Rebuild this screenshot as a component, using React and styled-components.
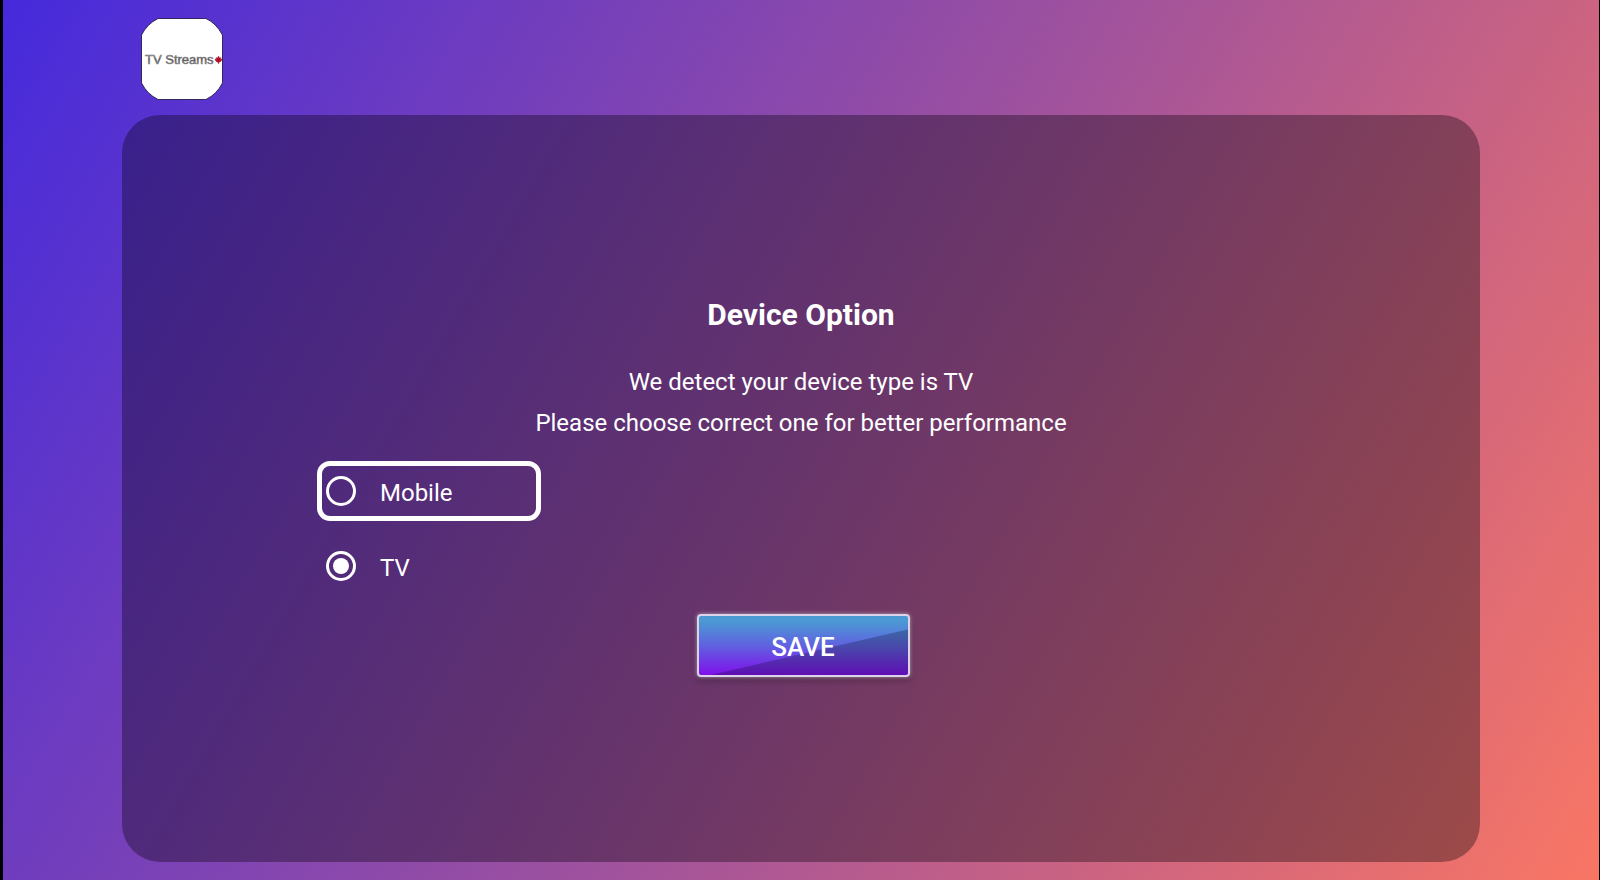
import { useState } from 'react';
import styled, { createGlobalStyle } from 'styled-components';

const GlobalStyle = createGlobalStyle`
  * {
    box-sizing: border-box;
  }
  body {
    margin: 0;
    background: #000;
    color: #fff;
    font-family: Roboto, "Liberation Sans", sans-serif;
  }
`;

const Page = styled.div`
  min-height: 100vh;
  display: flex;
  flex-direction: column;
  padding: 18px 119px;
  border-left: 3px solid #000;
  border-right: 1px solid #000;
  background: linear-gradient(120deg, #452adc, #9b50a0, #f97664);
  background-origin: padding-box;
`;

const Header = styled.header`
  padding: 0 19px 15px;
`;

const Logo = styled.svg`
  display: block;
  width: 82px;
  height: 82px;
`;

const Panel = styled.main`
  flex: 1;
  display: flex;
  flex-direction: column;
  justify-content: center;
  padding: 0 195px 6px;
  border-radius: 38px;
  background: rgba(4, 0, 6, 0.34);
`;

const Title = styled.h1`
  margin: 0 0 27px;
  font-size: 30px;
  line-height: 40px;
  font-weight: 700;
  text-align: center;
`;

const Message = styled.p`
  margin: 0;
  font-size: 24px;
  line-height: 41px;
  text-align: center;
`;

const Options = styled.div`
  display: flex;
  flex-direction: column;
  align-items: flex-start;
  gap: 15px;
  padding: 17px 0 18px;
`;

const Option = styled.label`
  display: flex;
  align-items: center;
  gap: 24px;
  width: 224px;
  height: 60px;
  padding-left: 4px;
  border: 5px solid ${(props) => (props.$focused ? '#fff' : 'transparent')};
  border-radius: 13px;
  cursor: pointer;
`;

const OptionText = styled.span`
  padding-top: 4px;
  font-size: 24px;
  line-height: 28px;
`;

const Radio = styled.input`
  appearance: none;
  display: grid;
  place-items: center;
  width: 30px;
  height: 30px;
  margin: 0;
  border: 3px solid #fff;
  border-radius: 50%;
  outline: none;

  &:checked::before {
    content: "";
    width: 16px;
    height: 16px;
    border-radius: 50%;
    background: #fff;
  }
`;

const Actions = styled.div`
  display: flex;
  justify-content: center;
  padding-left: 4px;
`;

const SaveButton = styled.button`
  width: 213px;
  height: 63px;
  padding: 4px 0 0;
  border: 2px solid #dcd3ea;
  border-radius: 4px;
  background:
    linear-gradient(167deg, transparent 57%, rgba(0, 10, 20, 0.26) 58%),
    linear-gradient(#4b9ad4 8%, #6062e0 50%, #8010ea);
  background-origin: padding-box;
  box-shadow: 0 0 4px rgba(255, 255, 255, 0.55), 0 3px 6px rgba(0, 0, 0, 0.35);
  color: #fff;
  font-family: inherit;
  font-size: 26px;
  font-weight: 500;
  cursor: pointer;
`;

const devices = ['Mobile', 'TV'];

const BrandLogo = () => (
  <Logo viewBox="0 0 82 82" role="img" aria-label="TV Streams">
    <defs>
      <linearGradient id="metal" x1="0" y1="0" x2="0" y2="1">
        <stop offset="0.2" stopColor="#aaa" />
        <stop offset="0.5" stopColor="#333" />
        <stop offset="0.85" stopColor="#999" />
      </linearGradient>
    </defs>
    <path
      d="M17 .5H65Q75 5 81.500 17V65Q76 76 65 81.500H17Q6 76 .5 65V17Q6 6 17 .5Z"
      fill="#fff"
      stroke="#33275c"
    />
    <text
      x="4"
      y="46"
      fontFamily="Liberation Sans, sans-serif"
      fontSize="13"
      fill="url(#metal)"
      stroke="#777"
      strokeWidth="0.5"
    >
      TV Streams
    </text>
    <path
      d="M77.500 38l1 2 1.200-.6-.2 1.800 1.500-.4-.4 1.700-1.500 1.500h-1.200v1.400h-.8v-1.400h-1.200l-1.500-1.500-.4-1.700 1.500.4-.2-1.800 1.200.6Z"
      fill="#b01020"
      stroke="#b01020"
      strokeWidth="0.4"
    />
  </Logo>
);

const App = () => {
  const [device, setDevice] = useState('TV');
  const [focused, setFocused] = useState('Mobile');

  return (
    <>
      <GlobalStyle />
      <Page>
        <Header>
          <BrandLogo />
        </Header>
        <Panel>
          <Title>Device Option</Title>
          <Message>We detect your device type is TV</Message>
          <Message>Please choose correct one for better performance</Message>
          <Options role="radiogroup" aria-label="Device Option">
            {devices.map((name) => (
              <Option key={name} htmlFor={name} $focused={focused === name}>
                <Radio
                  type="radio"
                  name="device"
                  id={name}
                  checked={device === name}
                  onChange={() => setDevice(name)}
                  onFocus={() => setFocused(name)}
                />
                <OptionText>{name}</OptionText>
              </Option>
            ))}
          </Options>
          <Actions>
            <SaveButton type="button">SAVE</SaveButton>
          </Actions>
        </Panel>
      </Page>
    </>
  );
};

export default App;
